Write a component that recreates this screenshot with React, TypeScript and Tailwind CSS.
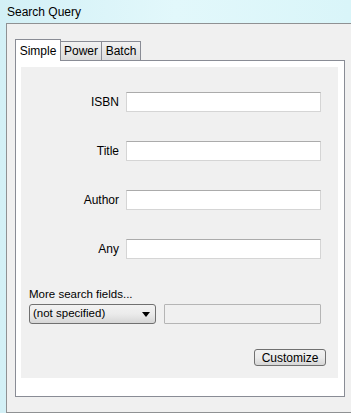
import React from 'react';

const font = { fontFamily: '"Liberation Sans", Arial, sans-serif' };

function Field({ label }: { label: string }) {
  return (
    <div className="flex items-center h-[20px]">
      <div className="w-[98px] text-right text-[12px] text-black">{label}</div>
      <div className="ml-[7px] w-[195px] h-[20px] bg-white border border-[#d5d5d5] border-t-[#ababab]" />
    </div>
  );
}

export default function App() {
  return (
    <div className="w-[351px] h-[413px] flex flex-col bg-gradient-to-r from-[#d3f0f6] via-[#e2f8fb] to-[#d9f5f9] overflow-hidden" style={font}>
      {/* title bar */}
      <div className="h-[23px] pl-[7px] flex items-center text-[12px] text-black">Search Query</div>

      <div className="flex flex-1">
        <div className="w-[6px]" />
        <div className="flex-1 bg-[#f0f0f0] border-t border-l border-b border-[#8f9193] pl-[8px] pt-[15px]">
          {/* tabs */}
          <div className="flex items-end h-[21px] text-[12px]">
            <div className="w-[46px] h-[22px] bg-white border border-b-0 border-[#898c95] flex items-center justify-center relative z-10 -mb-px">Simple</div>
            <div className="w-[41px] h-[19px] bg-gradient-to-b from-[#f2f2f2] to-[#dcdcdc] border border-l-0 border-b-0 border-[#898c95] flex items-center justify-center">Power</div>
            <div className="w-[39px] h-[19px] bg-gradient-to-b from-[#f2f2f2] to-[#dcdcdc] border border-l-0 border-b-0 border-[#898c95] flex items-center justify-center">Batch</div>
          </div>

          {/* panel */}
          <div className="w-[330px] h-[337px] bg-white border border-[#898c95] pl-[5px] pr-[6px] pt-[6px] pb-[18px]">
            <div className="h-full bg-[#f0f0f0] pt-[25px] flex flex-col">
              <div className="flex flex-col gap-[29px]">
                <Field label="ISBN" />
                <Field label="Title" />
                <Field label="Author" />
                <Field label="Any" />
              </div>

              <div className="mt-[28px] pl-[8px] text-[11.5px] text-black leading-[14px]">More search fields...</div>
              <div className="mt-[3px] pl-[8px] flex items-center">
                <div className="w-[127px] h-[20px] rounded-[3px] border border-[#707070] bg-gradient-to-b from-[#f2f2f2] via-[#ebebeb] to-[#d6d6d6] flex items-center justify-between pl-[3px] pr-[5px] text-[11.5px]">
                  <span>(not specified)</span>
                  <svg width="8" height="5" viewBox="0 0 8 5"><path d="M0 0h8L4 5z" fill="#000" /></svg>
                </div>
                <div className="ml-[8px] w-[157px] h-[20px] border border-[#b5b5b5] bg-[#f0f0f0] rounded-[1px]" />
              </div>

              <div className="mt-[25px] flex justify-end pr-[12px]">
                <div className="w-[72px] h-[17px] rounded-[3px] border border-[#707070] bg-gradient-to-b from-[#f2f2f2] via-[#ebebeb] to-[#d6d6d6] flex items-center justify-center text-[12px]">Customize</div>
              </div>
            </div>
          </div>
        </div>
      </div>
    </div>
  );
}
